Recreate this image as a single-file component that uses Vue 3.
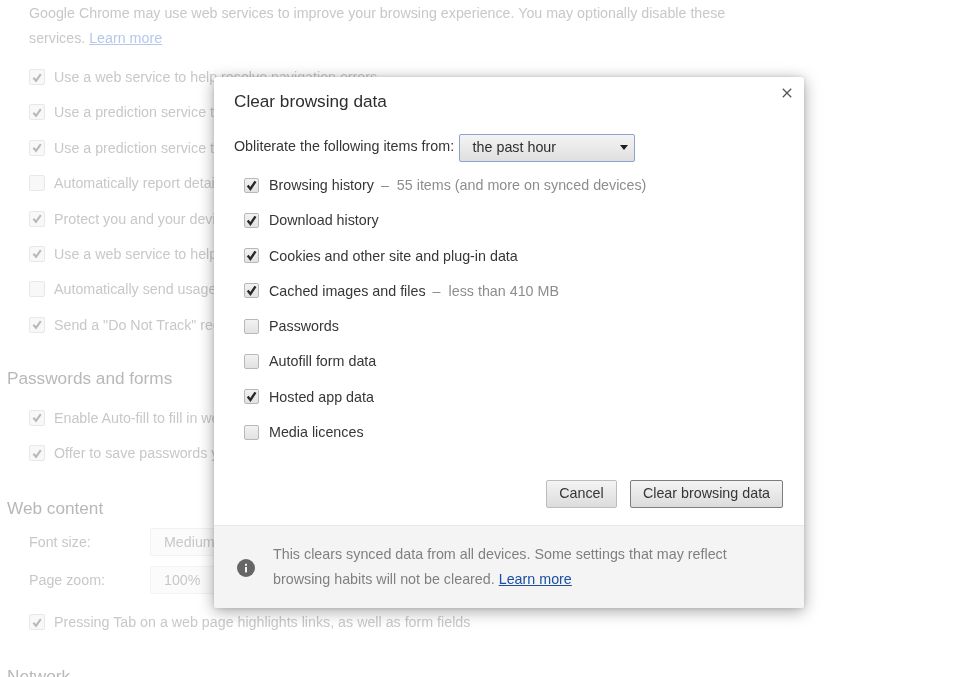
<script setup>
const topRows = [
  { text: 'Use a web service to help resolve navigation errors', on: true },
  { text: 'Use a prediction service to help complete searches and URLs typed in the address bar', on: true },
  { text: 'Use a prediction service to load pages more quickly', on: true },
  { text: 'Automatically report details of possible security incidents to Google', on: false },
  { text: 'Protect you and your device from dangerous sites', on: true },
  { text: 'Use a web service to help resolve spelling errors', on: true },
  { text: 'Automatically send usage statistics and crash reports to Google', on: false },
  { text: 'Send a "Do Not Track" request with your browsing traffic', on: true },
]
const pwRows = [
  { text: 'Enable Auto-fill to fill in web forms in a single click', on: true },
  { text: 'Offer to save passwords you enter on the web', on: true },
]
const items = [
  { text: 'Browsing history', note: '55 items (and more on synced devices)', on: true },
  { text: 'Download history', on: true },
  { text: 'Cookies and other site and plug-in data', on: true },
  { text: 'Cached images and files', note: 'less than 410 MB', on: true },
  { text: 'Passwords', on: false },
  { text: 'Autofill form data', on: false },
  { text: 'Hosted app data', on: true },
  { text: 'Media licences', on: false },
]
</script>

<template>
  <div class="screen">
    <div class="page">
      <p class="intro">Google Chrome may use web services to improve your browsing experience. You may optionally disable these<br>services. <a class="bg-link">Learn more</a></p>
      <div class="bg-list">
        <div v-for="r in topRows" :key="r.text" class="bg-row">
          <span class="bg-box">
            <svg v-if="r.on" viewBox="0 0 15 15" width="15" height="15"><path d="M3.6 7.8 6.4 11 11.6 3.8" fill="none" stroke="#b8b8b8" stroke-width="2.2"/></svg>
          </span>
          {{ r.text }}
        </div>
      </div>
      <h3 class="bg-head pw-head">Passwords and forms</h3>
      <div class="bg-list pw-list">
        <div v-for="r in pwRows" :key="r.text" class="bg-row">
          <span class="bg-box">
            <svg v-if="r.on" viewBox="0 0 15 15" width="15" height="15"><path d="M3.6 7.8 6.4 11 11.6 3.8" fill="none" stroke="#b8b8b8" stroke-width="2.2"/></svg>
          </span>
          {{ r.text }}
        </div>
      </div>
      <h3 class="bg-head web-head">Web content</h3>
      <div class="bg-field"><span class="bg-label">Font size:</span><span class="bg-select">Medium</span></div>
      <div class="bg-field zoom"><span class="bg-label">Page zoom:</span><span class="bg-select">100%</span></div>
      <div class="bg-row tab-row">
        <span class="bg-box">
          <svg viewBox="0 0 15 15" width="15" height="15"><path d="M3.6 7.8 6.4 11 11.6 3.8" fill="none" stroke="#b8b8b8" stroke-width="2.2"/></svg>
        </span>
        Pressing Tab on a web page highlights links, as well as form fields
      </div>
      <h3 class="bg-head net-head">Network</h3>
    </div>

    <div class="dialog">
      <svg class="close" viewBox="0 0 10 10" width="10" height="10"><path d="M.8.8 9.2 9.2M9.2.8.8 9.2" stroke="#555" stroke-width="1.3" fill="none"/></svg>
      <div class="body">
        <h2 class="title">Clear browsing data</h2>
        <div class="from">
          <span class="from-label">Obliterate the following items from:</span>
          <div class="select">
            <span>the past hour</span>
            <i class="caret"></i>
          </div>
        </div>
        <div class="items">
          <div v-for="it in items" :key="it.text" class="item">
            <span class="box">
              <svg v-if="it.on" viewBox="0 0 15 15" width="15" height="15"><path d="M3.7 7.6 6.4 10.9 11.5 3.4" fill="none" stroke="#2a2a2a" stroke-width="2.4"/></svg>
            </span>
            <span class="item-text">{{ it.text }}</span>
            <template v-if="it.note">
              <span class="dash">–</span>
              <span class="note">{{ it.note }}</span>
            </template>
          </div>
        </div>
        <div class="actions">
          <button class="btn cancel">Cancel</button>
          <button class="btn primary">Clear browsing data</button>
        </div>
      </div>
      <div class="footer">
        <svg class="info" viewBox="0 0 18 18" width="18" height="18">
          <circle cx="9" cy="9" r="9" fill="#666"/>
          <rect x="8" y="8" width="2" height="5.4" fill="#f4f4f4"/>
          <rect x="8" y="4.8" width="2" height="2" fill="#f4f4f4"/>
        </svg>
        <p class="foot-text">This clears synced data from all devices. Some settings that may reflect<br>browsing habits will not be cleared. <a class="link">Learn more</a></p>
      </div>
    </div>
  </div>
</template>

<style>
html, body { margin: 0; background: #fff; }
</style>

<style scoped>
.screen {
  position: relative;
  width: 960px;
  height: 677px;
  overflow: hidden;
  background: #fff;
  font-family: "Liberation Sans", Arial, sans-serif;
}
.page {
  padding: 0 0 0 29px;
  color: #c8c8c8;
  font-size: 14.25px;
  filter: blur(0.5px);
}
.intro {
  margin: 0;
  padding-top: 1px;
  line-height: 25px;
  height: 51px;
  white-space: nowrap;
}
.bg-link { color: #b4c8ea; text-decoration: underline; }
.bg-list { display: flex; flex-direction: column; gap: 17.4px; padding-top: 16px; }
.bg-row { display: flex; align-items: center; gap: 9px; height: 18px; white-space: nowrap; }
.bg-box {
  width: 14px;
  height: 14px;
  flex: none;
  border: 1px solid #e8e8e8;
  border-radius: 2px;
  background: #f8f8f8;
  display: flex;
  align-items: center;
  justify-content: center;
  overflow: hidden;
}
.bg-head {
  margin: 0 0 0 -22px;
  font-weight: 400;
  font-size: 17.2px;
  line-height: 20px;
  color: #b8b8b8;
}
.pw-head { padding-top: 34px; }
.pw-list { padding-top: 21px; }
.web-head { padding-top: 36px; }
.bg-field { display: flex; align-items: center; height: 28px; }
.web-head + .bg-field { margin-top: 10px; }
.zoom { margin-top: 10px; }
.bg-label { width: 121px; }
.bg-select {
  width: 200px;
  height: 26px;
  line-height: 26px;
  padding-left: 13px;
  border: 1px solid #f2f2f2;
  border-radius: 2px;
  background: #fbfbfb;
}
.tab-row { margin-top: 19px; }
.net-head { padding-top: 35px; }

.dialog {
  position: absolute;
  left: 214px;
  top: 77px;
  width: 590px;
  height: 531px;
  display: flex;
  flex-direction: column;
  background: #fff;
  border-radius: 3px;
  box-shadow: 0 3px 16px rgba(0, 0, 0, 0.36), 0 0 4px rgba(0, 0, 0, 0.12);
  color: #363636;
  font-size: 14.3px;
  overflow: hidden;
  filter: blur(0.3px);
}
.close { position: absolute; top: 11px; right: 12px; }
.body { flex: 1; padding: 0 21px 0 20px; display: flex; flex-direction: column; }
.title {
  margin: 14px 0 0;
  font-weight: 400;
  font-size: 17.2px;
  line-height: 21px;
  color: #2e2e2e;
}
.from { display: flex; align-items: flex-start; gap: 5px; margin-top: 22px; height: 28px; white-space: nowrap; }
.from-label { line-height: 24px; }
.select {
  box-sizing: border-box;
  width: 176px;
  height: 28px;
  display: flex;
  align-items: center;
  justify-content: space-between;
  padding: 0 6px 3px 12.5px;
  border: 1.5px solid #8aa3cf;
  border-radius: 2px;
  background: linear-gradient(#f4f4f4, #dfdfdf);
  color: #2e2e2e;
}
.caret {
  width: 0;
  height: 0;
  margin-top: 1px;
  border-left: 4.5px solid transparent;
  border-right: 4.5px solid transparent;
  border-top: 5px solid #1c1c1c;
}
.items { display: flex; flex-direction: column; gap: 17.3px; margin-top: 14px; padding-left: 10px; }
.item { display: flex; align-items: center; height: 18px; white-space: nowrap; }
.box {
  box-sizing: border-box;
  width: 15px;
  height: 15px;
  flex: none;
  margin-right: 10px;
  border: 1px solid #b8b8b8;
  border-radius: 2px;
  background: linear-gradient(#f2f2f2, #e2e2e2);
  display: flex;
  align-items: center;
  justify-content: center;
}
.box svg { margin: -1px; flex: none; }
.dash { margin: 0 8px 0 7px; color: #8d8d8d; }
.note { color: #8d8d8d; }
.actions { display: flex; justify-content: flex-end; gap: 13px; margin-top: 39px; }
.btn {
  box-sizing: border-box;
  height: 28px;
  padding: 0 0 3px;
  border-radius: 2px;
  font: inherit;
  color: #363636;
  background: linear-gradient(#f4f4f4, #dcdcdc);
  border: 1px solid #bdbdbd;
}
.cancel { width: 71px; }
.primary { width: 153px; border-color: #7d7d7d; }
.footer {
  height: 83px;
  box-sizing: border-box;
  flex: none;
  display: flex;
  align-items: center;
  gap: 18px;
  padding: 0 0 0 23px;
  background: #f4f4f4;
  border-top: 1px solid #e8e8e8;
}
.info { flex: none; margin-top: 1px; }
.foot-text { margin: 0; line-height: 25px; color: #808080; white-space: nowrap; }
.link { color: #1c4fa3; text-decoration: underline; }
</style>
